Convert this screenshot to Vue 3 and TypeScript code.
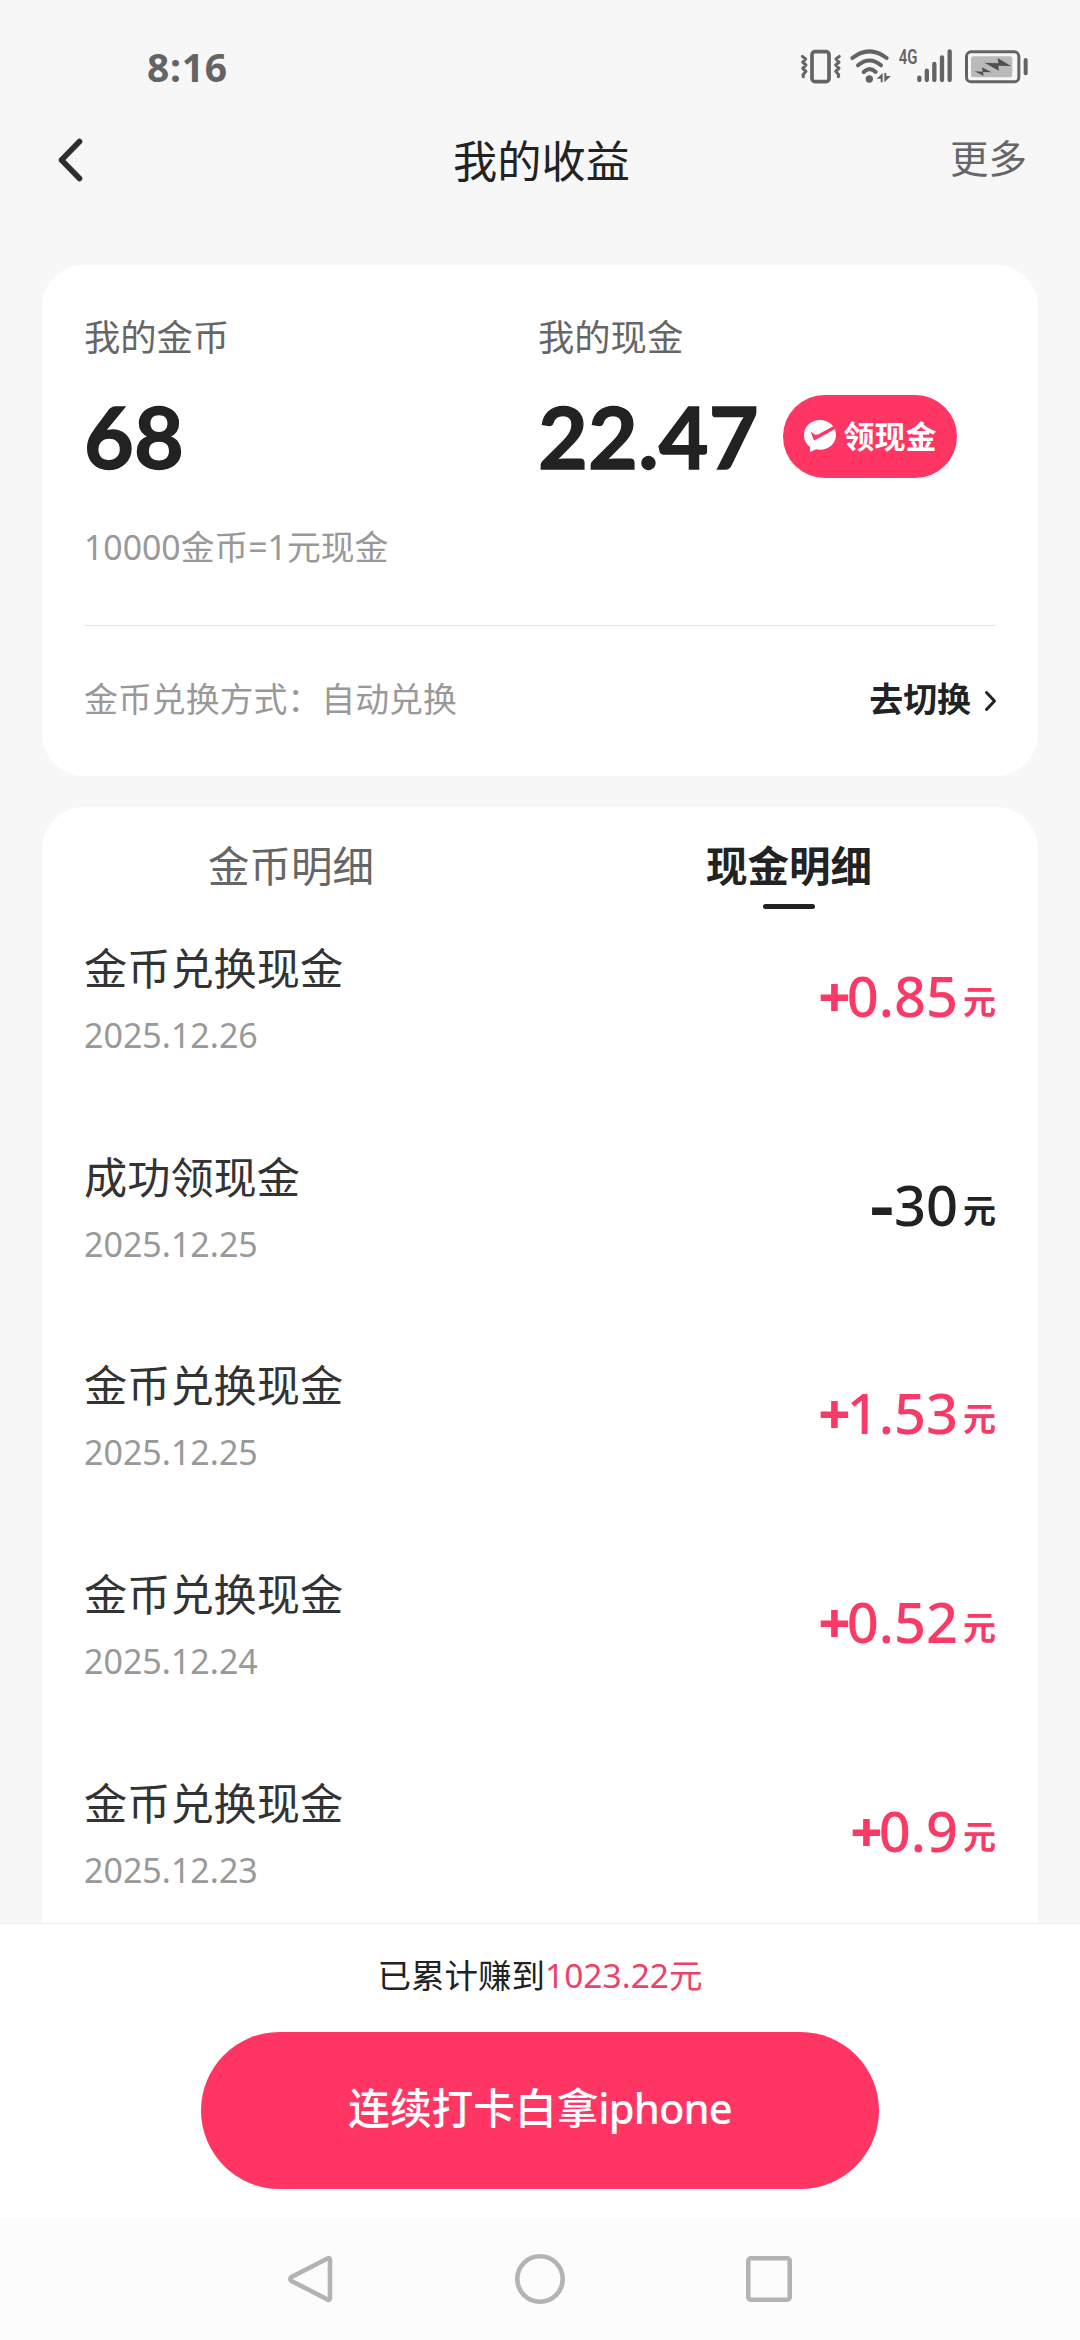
<script setup lang="ts">
interface CashRecord {
  title: string
  date: string
  sign: '+' | '-'
  amount: string
}

const records: CashRecord[] = [
  { title: '金币兑换现金', date: '2025.12.26', sign: '+', amount: '0.85' },
  { title: '成功领现金', date: '2025.12.25', sign: '-', amount: '30' },
  { title: '金币兑换现金', date: '2025.12.25', sign: '+', amount: '1.53' },
  { title: '金币兑换现金', date: '2025.12.24', sign: '+', amount: '0.52' },
  { title: '金币兑换现金', date: '2025.12.23', sign: '+', amount: '0.9' },
]
</script>

<template>
  <div class="screen">
    <div class="status">
      <span class="clock">8:16</span>
      <svg class="status-icons" viewBox="60 20 690 180" width="230" height="60">
        <g fill="none" stroke="#646464" stroke-linecap="round" stroke-linejoin="round">
          <rect x="96" y="64" width="51" height="90" rx="9" stroke-width="11" />
          <path stroke-width="9" d="M67 78l10 8-9 10 10 8-10 10 10 9-9 10 1 6" />
          <path stroke-width="9" d="M178 78l-10 8 9 10-10 8 10 10-10 9 9 10-1 6" />
          <path stroke-width="12" d="M217 83Q268 43 320 83" />
          <path stroke-width="12" d="M234 105Q268 76 303 105" />
          <path stroke-width="12" d="M251 125Q268 108 287 125" />
          <path stroke-width="13" d="M418 142v7M440.500 121v28M463 101v48M486 81v68M509 63v86" />
          <rect x="559.500" y="64.500" width="157" height="90" rx="14" stroke-width="9" />
          <path stroke-width="12" d="M737 89v40" />
        </g>
        <circle cx="268" cy="146" r="11" fill="#646464" />
        <path d="M290 145l18-17v28h-6v-11zM313 156v-28h6v9h14z" fill="#646464" />
        <rect x="573" y="78" width="124" height="63" rx="8" fill="#bababa" />
        <path d="M613 97l42 2-2-16 40 24-38-1 2 15zM583 123l25 1-2-13 29 15-26-1 2 11z" fill="#505050" />
        <text class="net" x="356" y="101" textLength="56" lengthAdjust="spacingAndGlyphs">4G</text>
      </svg>
    </div>

    <header class="header">
      <svg class="back" viewBox="0 0 30 50" width="30" height="50">
        <path d="M23.500 6.500L5.500 25 23.500 43.500" fill="none" stroke="#2e2e2e" stroke-width="5.600" stroke-linecap="round" stroke-linejoin="round" />
      </svg>
      <h1 class="title">我的收益</h1>
      <span class="more">更多</span>
    </header>

    <main class="content">
      <section class="card balance">
        <div class="columns">
          <div class="column">
            <div class="label">我的金币</div>
            <div class="value-row"><span class="value">68</span></div>
          </div>
          <div class="column">
            <div class="label">我的现金</div>
            <div class="value-row">
              <span class="value">22.47</span>
              <button class="withdraw">
                <svg viewBox="0 0 34 34" width="34" height="34">
                  <path d="M17 1C8 1 1 7.500 1 16c0 5 2.300 9 6 11.700V33l6-2.800c1.300.3 2.600.5 4 .5 9 0 16-6.500 16-14.700C33 7.500 26 1 17 1z" fill="#fff" />
                  <path d="M7.500 12.500l3.500 9 4-2 19-10.500-1.500-3-17.500 9.500-3 .3z" fill="#ff3664" />
                </svg>
                <span>领现金</span>
              </button>
            </div>
          </div>
        </div>
        <div class="rate">10000金币=1元现金</div>
        <div class="exchange">
          <span class="mode">金币兑换方式：自动兑换</span>
          <span class="switch">去切换
            <svg class="chevron" viewBox="0 0 14 24" width="14" height="24">
              <path d="M2.500 3.500L10.500 12l-8 8.500" fill="none" stroke="#222" stroke-width="3" stroke-linecap="round" stroke-linejoin="round" />
            </svg>
          </span>
        </div>
      </section>

      <section class="card details">
        <nav class="tabs">
          <div class="tab">金币明细</div>
          <div class="tab active">现金明细</div>
        </nav>
        <div class="list">
          <div v-for="(record, i) in records" :key="i" class="record">
            <div>
              <div class="record-title">{{ record.title }}</div>
              <div class="record-date">{{ record.date }}</div>
            </div>
            <div class="amount" :class="{ income: record.sign === '+' }">
              <span :class="record.sign === '+' ? 'plus' : 'minus'">{{ record.sign }}</span>
              <span>{{ record.amount }}</span>
              <span class="unit">元</span>
            </div>
          </div>
        </div>
      </section>
    </main>

    <footer class="footer">
      <div class="total">已累计赚到<span class="sum">1023.22元</span></div>
      <button class="cta">连续打卡白拿<span class="latin">iphone</span></button>
    </footer>

    <div class="navbar">
      <svg viewBox="0 0 52 52" width="52" height="52">
        <path d="M43.500 5.500Q46 4 46 7v38q0 3-2.500 1.500L7.500 28q-2.500-2 0-4z" class="key" />
      </svg>
      <svg viewBox="0 0 52 52" width="52" height="52">
        <circle cx="26" cy="26" r="22.700" class="key" />
      </svg>
      <svg viewBox="0 0 52 52" width="52" height="52">
        <rect x="5.300" y="5.300" width="41.400" height="41.400" rx="2.500" class="key" />
      </svg>
    </div>
  </div>
</template>

<style>
body {
  background: #f7f7f7;
}
</style>

<style scoped>
.screen {
  width: 1080px;
  height: 2340px;
  display: flex;
  flex-direction: column;
  overflow: hidden;
  background: #f7f7f7;
  color: #222;
  font-family: "Noto Sans", "Noto Sans CJK SC", sans-serif;
}
.status {
  height: 107px;
  flex: none;
  box-sizing: border-box;
  padding: 27px 50px 0 147px;
  display: flex;
  align-items: center;
  justify-content: space-between;
}
.clock {
  font-size: 39px;
  font-weight: 700;
  line-height: 50px;
  letter-spacing: 0.700px;
  color: #646464;
}
.net {
  font-family: Roboto, sans-serif;
  font-size: 61px;
  font-weight: 600;
  fill: #646464;
}
.header {
  height: 108px;
  flex: none;
  display: grid;
  grid-template-columns: 1fr auto 1fr;
  align-items: center;
  padding: 0 53px 0 56px;
}
.back {
  margin-bottom: 2px;
}
.title {
  margin: 0;
  font-size: 44.200px;
  font-weight: 400;
  line-height: 60px;
}
.more {
  justify-self: end;
  font-size: 38.500px;
  line-height: 60px;
  margin-bottom: 7px;
  color: #666;
}
.content {
  flex: 1;
  min-height: 0;
  overflow: hidden;
  display: flex;
  flex-direction: column;
  gap: 31px;
  padding: 50px 42px 0;
}
.card {
  background: #fff;
  flex: none;
  box-sizing: border-box;
}
.balance {
  height: 511px;
  border-radius: 42px;
  padding: 42px 42px 0;
}
.columns {
  display: grid;
  grid-template-columns: 454px 1fr;
}
.label {
  font-size: 36.300px;
  line-height: 60px;
  color: #666;
}
.value-row {
  display: flex;
  align-items: center;
  gap: 24px;
  height: 84px;
  margin-top: 27px;
}
.value {
  font-family: Lato, sans-serif;
  font-size: 86px;
  font-weight: 700;
  line-height: 84px;
  letter-spacing: 0.200px;
  -webkit-text-stroke: 1.300px #222;
}
.withdraw {
  display: flex;
  align-items: center;
  justify-content: center;
  gap: 6px;
  width: 174px;
  height: 83px;
  margin: 0;
  padding: 0;
  border: 0;
  border-radius: 42px;
  background: #ff3664;
  color: #fff;
  font-family: inherit;
  font-size: 31px;
  font-weight: 700;
  line-height: 40px;
}
.rate {
  margin-top: 39px;
  font-size: 33.800px;
  line-height: 60px;
  height: 108px;
  color: #999;
  border-bottom: 1px solid #e6e6e6;
}
.exchange {
  display: flex;
  align-items: center;
  justify-content: space-between;
  height: 143px;
  font-size: 33.900px;
}
.mode {
  color: #999;
}
.switch {
  display: flex;
  align-items: center;
  gap: 13px;
  font-weight: 700;
}
.chevron {
  margin: 6px -2px 0 0;
}
.details {
  height: 1200px;
  border-radius: 42px 42px 0 0;
}
.tabs {
  display: flex;
  height: 118px;
}
.tab {
  flex: 1;
  text-align: center;
  font-size: 41.500px;
  line-height: 118px;
  color: #666;
}
.active {
  position: relative;
  color: #222;
  font-weight: 700;
}
.active::after {
  content: "";
  position: absolute;
  left: 50%;
  top: 97px;
  width: 52px;
  height: 5px;
  margin-left: -26px;
  border-radius: 3px;
  background: #222;
}
.list {
  padding: 14px 42px 0;
}
.record {
  display: flex;
  justify-content: space-between;
  height: 208.700px;
}
.record-title {
  font-size: 43.200px;
  line-height: 60px;
  color: #333;
}
.record-date {
  margin-top: 16px;
  font-size: 34px;
  line-height: 40px;
  color: #999;
}
.amount {
  display: flex;
  align-items: baseline;
  height: 112px;
  font-size: 56px;
  font-weight: 500;
  line-height: 113px;
}
.plus {
  font-weight: 800;
  margin-right: -4px;
}
.minus {
  font-weight: 800;
  margin-right: 3px;
  transform: scaleX(1.300);
}
.unit {
  margin-left: 5px;
  font-size: 33px;
  font-weight: 700;
  transform: translateY(-3px);
}
.income {
  color: #f93a66;
}
.footer {
  flex: none;
  height: 295px;
  box-sizing: border-box;
  border-top: 1px solid #f0f0f0;
  background: #fff;
  display: flex;
  flex-direction: column;
  align-items: center;
}
.total {
  margin-top: 21px;
  font-size: 33.500px;
  line-height: 60px;
}
.sum {
  color: #ec4168;
}
.cta {
  width: 678px;
  height: 157px;
  margin: 27px 0 0;
  padding: 0 0 9px;
  border: 0;
  border-radius: 79px;
  background: #ff3664;
  color: #fff;
  font-family: inherit;
  font-size: 41.700px;
  font-weight: 500;
}
.latin {
  letter-spacing: -0.900px;
}
.navbar {
  flex: none;
  height: 122px;
  box-sizing: border-box;
  padding: 0 285px 0 284px;
  display: flex;
  align-items: center;
  justify-content: space-between;
  background: #fcfcfc;
}
.key {
  fill: none;
  stroke: #b3b3b3;
  stroke-width: 4.600;
}
</style>
